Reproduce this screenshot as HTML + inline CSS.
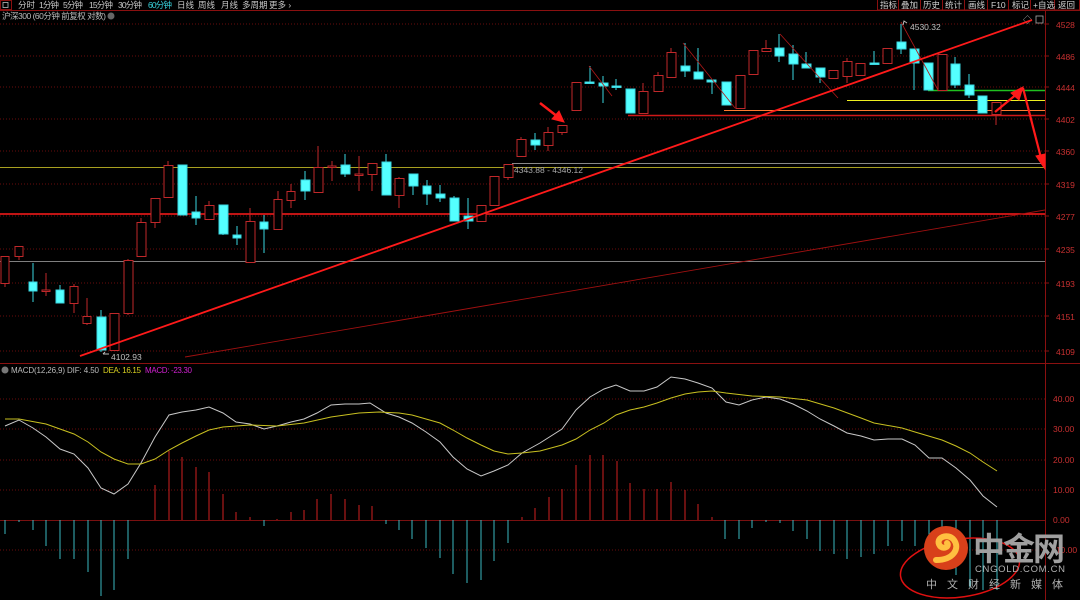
<!DOCTYPE html>
<html><head><meta charset="utf-8"><style>
html,body{margin:0;padding:0;background:#000;width:1080px;height:600px;overflow:hidden;font-family:"Liberation Sans","Noto Sans CJK SC",sans-serif}
svg{position:absolute;left:0;top:0}
</style></head><body>
<svg width="1080" height="600" viewBox="0 0 1080 600" xmlns="http://www.w3.org/2000/svg" font-family="Liberation Sans, Noto Sans CJK SC, sans-serif">
<rect width="1080" height="600" fill="#000"/>
<line x1="0" y1="10.5" x2="1080" y2="10.5" stroke="#8a1010" stroke-width="1"/>
<rect x="0.5" y="0.5" width="11" height="9" fill="none" stroke="#8a1010"/>
<rect x="3" y="2.5" width="5" height="5" fill="none" stroke="#bbb" stroke-width="0.8"/>
<g font-size="8.5" fill="#c8c8c8">
<text x="18" y="8">分时</text><text x="39" y="8" textLength="20">1分钟</text><text x="63" y="8" textLength="20">5分钟</text><text x="89" y="8" textLength="24">15分钟</text><text x="118" y="8" textLength="24">30分钟</text><text x="148" y="8" textLength="24" fill="#3ad6e0">60分钟</text><text x="177" y="8">日线</text><text x="198" y="8">周线</text><text x="221" y="8">月线</text><text x="242" y="8">多周期</text><text x="269" y="8">更多 ›</text>
<text x="2" y="19" fill="#bbb" textLength="104">沪深300 (60分钟 前复权 对数)</text>
</g>
<circle cx="111" cy="16" r="3.5" fill="#666"/>
<g stroke="#8a1010" fill="none">
<rect x="877.5" y="-1" width="21" height="11"/><rect x="898.5" y="-1" width="22" height="11"/><rect x="920.5" y="-1" width="22" height="11"/><rect x="942.5" y="-1" width="22" height="11"/><rect x="964.5" y="-1" width="23" height="11"/><rect x="987.5" y="-1" width="21" height="11"/><rect x="1008.5" y="-1" width="22" height="11"/><rect x="1030.5" y="-1" width="24" height="11"/><rect x="1054.5" y="-1" width="25" height="11"/>
</g>
<g font-size="8.5" fill="#d0d0d0">
<text x="880" y="8">指标</text><text x="901" y="8">叠加</text><text x="923" y="8">历史</text><text x="945" y="8">统计</text><text x="968" y="8">画线</text><text x="991" y="8">F10</text><text x="1012" y="8">标记</text><text x="1033" y="8">+自选</text><text x="1058" y="8">返回</text>
</g>
<text x="1023" y="23" font-size="9" fill="#aaa">◇</text>
<rect x="1036" y="16" width="7" height="7" fill="none" stroke="#aaa" stroke-width="0.8"/>
<line x1="1045.5" y1="10" x2="1045.5" y2="600" stroke="#8a1010"/>
<line x1="0" y1="363.5" x2="1080" y2="363.5" stroke="#8a1010"/>
<g stroke="#6a0c0c" stroke-dasharray="1,2">
<line x1="0" y1="24" x2="1045" y2="24"/><line x1="0" y1="56" x2="1045" y2="56"/><line x1="0" y1="87" x2="1045" y2="87"/><line x1="0" y1="119" x2="1045" y2="119"/><line x1="0" y1="151" x2="1045" y2="151"/><line x1="0" y1="184" x2="1045" y2="184"/><line x1="0" y1="216" x2="1045" y2="216"/><line x1="0" y1="249" x2="1045" y2="249"/><line x1="0" y1="283" x2="1045" y2="283"/><line x1="0" y1="316" x2="1045" y2="316"/><line x1="0" y1="351" x2="1045" y2="351"/>
<line x1="0" y1="399" x2="1045" y2="399"/><line x1="0" y1="429" x2="1045" y2="429"/><line x1="0" y1="460" x2="1045" y2="460"/><line x1="0" y1="490" x2="1045" y2="490"/><line x1="0" y1="550" x2="1045" y2="550"/>
</g>
<g stroke="#8a1010"><line x1="1045" y1="24" x2="1049" y2="24"/><line x1="1045" y1="56" x2="1049" y2="56"/><line x1="1045" y1="87" x2="1049" y2="87"/><line x1="1045" y1="119" x2="1049" y2="119"/><line x1="1045" y1="151" x2="1049" y2="151"/><line x1="1045" y1="184" x2="1049" y2="184"/><line x1="1045" y1="216" x2="1049" y2="216"/><line x1="1045" y1="249" x2="1049" y2="249"/><line x1="1045" y1="283" x2="1049" y2="283"/><line x1="1045" y1="316" x2="1049" y2="316"/><line x1="1045" y1="351" x2="1049" y2="351"/></g>
<g font-size="8.5" fill="#c83030">
<text x="1056" y="28">4528</text><text x="1056" y="60">4486</text><text x="1056" y="91">4444</text><text x="1056" y="123">4402</text><text x="1056" y="155">4360</text><text x="1056" y="188">4319</text><text x="1056" y="220">4277</text><text x="1056" y="253">4235</text><text x="1056" y="287">4193</text><text x="1056" y="320">4151</text><text x="1056" y="355">4109</text>
<text x="1053" y="402">40.00</text><text x="1053" y="432">30.00</text><text x="1053" y="463">20.00</text><text x="1053" y="493">10.00</text><text x="1053" y="523">0.00</text><text x="1053" y="553">-10.00</text>
</g>
<line x1="0" y1="167.5" x2="1045" y2="167.5" stroke="#a8a020"/>
<line x1="512" y1="163.5" x2="1045" y2="163.5" stroke="#888"/>
<line x1="0" y1="261.5" x2="1045" y2="261.5" stroke="#aaa" stroke-width="0.8"/>
<line x1="0" y1="214" x2="1045" y2="214" stroke="#ff1a1a" stroke-width="1.6"/>
<line x1="628" y1="115.5" x2="1045" y2="115.5" stroke="#d01818" stroke-width="1.4"/>
<line x1="724" y1="110.5" x2="1045" y2="110.5" stroke="#ff7a30"/>
<line x1="847" y1="100.5" x2="1045" y2="100.5" stroke="#f0f020"/>
<line x1="928" y1="90.5" x2="1045" y2="90.5" stroke="#20c020" stroke-width="1.5"/>
<line x1="185" y1="357" x2="1045" y2="210" stroke="#a01010" stroke-width="0.9"/>
<g stroke-width="1">
<g stroke="#c0282a" fill="#000">
<line x1="5" y1="256" x2="5" y2="287"/><rect x="1" y="256.5" width="8" height="27"/>
<line x1="19" y1="246" x2="19" y2="260"/><rect x="15" y="246.5" width="8" height="10"/>
<line x1="46" y1="273" x2="46" y2="296"/><rect x="42" y="290" width="8" height="1.5"/>
<line x1="74" y1="284" x2="74" y2="313"/><rect x="70" y="286.5" width="8" height="17"/>
<line x1="87" y1="298" x2="87" y2="325"/><rect x="83" y="316.5" width="8" height="7"/>
<rect x="110" y="313.5" width="9" height="37"/>
<line x1="128" y1="259" x2="128" y2="315"/><rect x="124" y="260.5" width="9" height="53"/>
<line x1="141" y1="218" x2="141" y2="256"/><rect x="137" y="222.5" width="9" height="34"/>
<line x1="155" y1="198" x2="155" y2="228"/><rect x="151" y="198.5" width="9" height="24"/>
<line x1="168" y1="161" x2="168" y2="197"/><rect x="164" y="165.5" width="9" height="32"/>
<line x1="209" y1="201" x2="209" y2="219"/><rect x="205" y="205.5" width="9" height="14"/>
<line x1="250" y1="208" x2="250" y2="262"/><rect x="246" y="221.5" width="9" height="41"/>
<line x1="278" y1="191" x2="278" y2="229"/><rect x="274" y="199.5" width="8" height="30"/>
<line x1="291" y1="184" x2="291" y2="208"/><rect x="287" y="191.5" width="8" height="9"/>
<line x1="318" y1="146" x2="318" y2="192"/><rect x="314" y="167.5" width="9" height="25"/>
<line x1="332" y1="161" x2="332" y2="181"/><rect x="328" y="166" width="8" height="1.5"/>
<line x1="359" y1="156" x2="359" y2="191"/><rect x="355" y="174" width="8" height="1.5"/>
<line x1="372" y1="163" x2="372" y2="191"/><rect x="368" y="163.5" width="9" height="11"/>
<line x1="399" y1="177" x2="399" y2="208"/><rect x="395" y="178.5" width="9" height="17"/>
<rect x="477" y="205.5" width="9" height="16"/>
<rect x="490" y="176.5" width="9" height="29"/>
<line x1="508" y1="164" x2="508" y2="180"/><rect x="504" y="164.5" width="9" height="13"/>
<line x1="521" y1="137" x2="521" y2="156"/><rect x="517" y="139.5" width="9" height="17"/>
<line x1="548" y1="127" x2="548" y2="151"/><rect x="544" y="132.5" width="9" height="13"/>
<line x1="562" y1="125" x2="562" y2="135"/><rect x="558" y="125.5" width="9" height="7"/>
<rect x="572" y="82.5" width="9" height="28"/>
<line x1="643" y1="83" x2="643" y2="113"/><rect x="639" y="91.5" width="9" height="22"/>
<line x1="658" y1="72" x2="658" y2="91"/><rect x="654" y="75.5" width="9" height="16"/>
<line x1="671" y1="48" x2="671" y2="77"/><rect x="667" y="52.5" width="9" height="25"/>
<rect x="736" y="75.5" width="9" height="33"/>
<rect x="749" y="50.5" width="9" height="24"/>
<line x1="766" y1="40" x2="766" y2="51"/><rect x="762" y="48.5" width="9" height="3"/>
<line x1="833" y1="70" x2="833" y2="78"/><rect x="829" y="70.5" width="9" height="8"/>
<line x1="847" y1="58" x2="847" y2="83"/><rect x="843" y="61.5" width="9" height="15"/>
<rect x="856" y="63.5" width="9" height="12"/>
<rect x="883" y="48.5" width="9" height="15"/>
<rect x="938" y="54.5" width="9" height="36"/>
<line x1="996" y1="102" x2="996" y2="125"/><rect x="992" y="102.5" width="9" height="12"/>
</g>
<g stroke="#3ad6e0" fill="#54ffff">
<line x1="33" y1="263" x2="33" y2="302"/><rect x="29" y="282" width="8" height="9"/>
<line x1="60" y1="285" x2="60" y2="303"/><rect x="56" y="290" width="8" height="13"/>
<line x1="101" y1="310" x2="101" y2="352"/><rect x="97" y="317" width="9" height="33"/>
<rect x="178" y="165" width="9" height="50"/>
<line x1="196" y1="196" x2="196" y2="225"/><rect x="192" y="212" width="8" height="6"/>
<line x1="223" y1="205" x2="223" y2="235"/><rect x="219" y="205" width="9" height="29"/>
<line x1="237" y1="226" x2="237" y2="245"/><rect x="233" y="235" width="8" height="3"/>
<line x1="264" y1="215" x2="264" y2="253"/><rect x="260" y="222" width="8" height="7"/>
<line x1="305" y1="171" x2="305" y2="200"/><rect x="301" y="180" width="9" height="11"/>
<line x1="345" y1="154" x2="345" y2="177"/><rect x="341" y="165" width="9" height="9"/>
<line x1="386" y1="154" x2="386" y2="195"/><rect x="382" y="162" width="9" height="33"/>
<line x1="413" y1="174" x2="413" y2="195"/><rect x="409" y="174" width="9" height="12"/>
<line x1="427" y1="180" x2="427" y2="205"/><rect x="423" y="186" width="8" height="8"/>
<line x1="440" y1="185" x2="440" y2="202"/><rect x="436" y="194" width="9" height="4"/>
<line x1="454" y1="196" x2="454" y2="221"/><rect x="450" y="198" width="9" height="23"/>
<line x1="468" y1="198" x2="468" y2="229"/><rect x="464" y="216" width="9" height="5"/>
<line x1="535" y1="133" x2="535" y2="150"/><rect x="531" y="140" width="9" height="5"/>
<line x1="590" y1="66" x2="590" y2="83"/><rect x="585" y="82" width="9" height="1.5"/>
<line x1="603" y1="76" x2="603" y2="103"/><rect x="599" y="83" width="9" height="3"/>
<line x1="616" y1="79" x2="616" y2="90"/><rect x="612" y="86" width="9" height="1.5"/>
<rect x="626" y="89" width="9" height="24"/>
<line x1="685" y1="43" x2="685" y2="77"/><rect x="681" y="66" width="9" height="5"/>
<line x1="698" y1="48" x2="698" y2="79"/><rect x="694" y="72" width="9" height="7"/>
<line x1="712" y1="80" x2="712" y2="94"/><rect x="707" y="80" width="9" height="2"/>
<rect x="722" y="82" width="9" height="23"/>
<line x1="779" y1="34" x2="779" y2="62"/><rect x="775" y="48" width="9" height="8"/>
<line x1="793" y1="45" x2="793" y2="80"/><rect x="789" y="54" width="9" height="10"/>
<line x1="806" y1="52" x2="806" y2="68"/><rect x="802" y="64" width="9" height="4"/>
<line x1="820" y1="68" x2="820" y2="83"/><rect x="816" y="68" width="9" height="9"/>
<line x1="874" y1="51" x2="874" y2="65"/><rect x="870" y="63" width="9" height="1.5"/>
<line x1="901" y1="24" x2="901" y2="54"/><rect x="897" y="42" width="9" height="7"/>
<line x1="914" y1="49" x2="914" y2="90"/><rect x="910" y="49" width="9" height="14"/>
<rect x="924" y="63" width="9" height="27"/>
<line x1="955" y1="57" x2="955" y2="88"/><rect x="951" y="64" width="9" height="21"/>
<line x1="969" y1="74" x2="969" y2="98"/><rect x="965" y="85" width="9" height="10"/>
<rect x="978" y="96" width="9" height="17"/>
</g>
</g>
<g stroke="#b01818" stroke-width="0.8">
<line x1="589" y1="66" x2="612" y2="96"/><line x1="683" y1="43" x2="735" y2="108"/><line x1="780" y1="34" x2="838" y2="98"/><line x1="901" y1="22" x2="938" y2="90"/>
</g>
<line x1="80" y1="356" x2="1032" y2="20" stroke="#ff1a1a" stroke-width="1.8"/>
<g fill="#ff1a1a" stroke="#ff1a1a">
<line x1="540" y1="103" x2="558" y2="117" stroke-width="2.5"/><polygon points="564,122 552,119 559,111"/>
<line x1="995" y1="112" x2="1018" y2="93" stroke-width="2.2"/><polygon points="1023,87 1019,100 1011,93"/>
<line x1="1023" y1="88" x2="1041" y2="158" stroke-width="2.2"/><polygon points="1045,169 1036,156 1045,154"/>
</g>
<g font-size="8.5" fill="#c0c0c0">
<text x="111" y="360">4102.93</text><path d="M103 354 h6 M103 354 l2 -2" stroke="#bbb" fill="none"/>
<text x="910" y="30">4530.32</text><path d="M903 25 l1 -4 l3 2" stroke="#bbb" fill="none"/>
<text x="514" y="173" fill="#a8a8a8">4343.88 - 4346.12</text>
</g>
<circle cx="5" cy="370" r="3.5" fill="#777"/>
<g font-size="8"><text x="11" y="373" fill="#bbb" textLength="54">MACD(12,26,9)</text><text x="67" y="373" fill="#bbb" textLength="32">DIF: 4.50</text><text x="103" y="373" fill="#d8d020" textLength="38">DEA: 16.15</text><text x="145" y="373" fill="#d020d0" textLength="47">MACD: -23.30</text></g>
<line x1="0" y1="520.5" x2="1045" y2="520.5" stroke="#7a1010"/>
<g stroke="#d02020" stroke-width="1">
<path d="M155 520V485M169 520V451M182 520V457M196 520V467M209 520V472M223 520V494M236 520V512M250 520V517M277 520V519M291 520V512M304 520V510M317 520V499M331 520V494M345 520V499M359 520V505M372 520V506M522 520V517M535 520V508M549 520V497M562 520V489M576 520V465M590 520V455M603 520V455M617 520V461M630 520V483M644 520V489M657 520V489M671 520V482M685 520V490M698 520V504M712 520V517"/>
</g>
<g stroke="#3ab8c0" stroke-width="1">
<path d="M5 520V534M19 520V522M33 520V530M46 520V546M60 520V559M74 520V559M88 520V572M101 520V596M114 520V590M128 520V559M264 520V526M386 520V524M399 520V530M412 520V539M426 520V548M440 520V558M453 520V574M467 520V583M481 520V580M494 520V561M508 520V543M725 520V539M739 520V539M752 520V528M766 520V522M780 520V523M793 520V531M807 520V539M820 520V551M834 520V554M847 520V559M861 520V557M874 520V554M888 520V546M902 520V541M915 520V546M929 520V560M942 520V562M956 520V575M970 520V588M983 520V590M997 520V590"/>
</g>
<polyline fill="none" stroke="#c8c8c8" stroke-width="1" points="5,426 19,420 33,428 46,437 60,449 74,454 88,468 101,488 114,494 128,484 141,463 155,437 169,415 182,412 196,410 209,407 223,413 236,422 250,424 264,429 277,426 291,422 304,419 317,413 331,405 345,404 359,404 370,403 386,413 399,417 412,423 426,432 440,442 453,457 467,469 481,476 494,471 508,465 522,453 540,443 562,429 576,410 590,397 604,389 616,385 630,391 644,391 657,387 671,377 685,379 698,383 712,388 726,402 739,405 752,400 766,397 780,399 793,404 807,411 820,419 834,426 847,433 861,436 874,440 888,439 902,439 915,445 929,458 942,458 956,468 970,480 983,496 997,507"/>
<polyline fill="none" stroke="#c8c020" stroke-width="1" points="5,419 19,419 46,424 74,434 88,442 101,452 114,459 128,464 141,464 155,459 169,450 182,443 196,436 209,430 223,427 250,425 277,426 304,423 331,417 359,413 379,412 399,413 412,415 440,423 453,430 467,438 481,445 494,451 508,454 522,453 540,451 562,445 576,439 590,430 604,423 616,415 630,410 644,407 657,403 671,398 685,394 698,392 712,391 726,393 752,396 780,397 807,400 834,408 861,418 874,423 902,428 915,432 942,440 956,446 970,453 983,462 997,471"/>
<ellipse cx="960" cy="568" rx="60" ry="29" transform="rotate(-8 960 568)" fill="none" stroke="#e01010" stroke-width="1.5"/>
<circle cx="946" cy="548" r="22" fill="#d8401a"/>
<path d="M936 560 C954 560 960 548 954 540 C948 532 934 538 940 546 C944 550 950 546 947 543" fill="none" stroke="#ffc040" stroke-width="6" stroke-linecap="round"/>
<text x="973" y="560" font-size="32" font-weight="bold" fill="#a0a0a0" textLength="92">中金网</text>
<text x="975" y="572" font-size="9.5" fill="#b0b0b0" textLength="90">CNGOLD.COM.CN</text>
<text x="926" y="588" font-size="11" fill="#b0b0b0" textLength="137">中文财经新媒体</text>
</svg>
</body></html>
